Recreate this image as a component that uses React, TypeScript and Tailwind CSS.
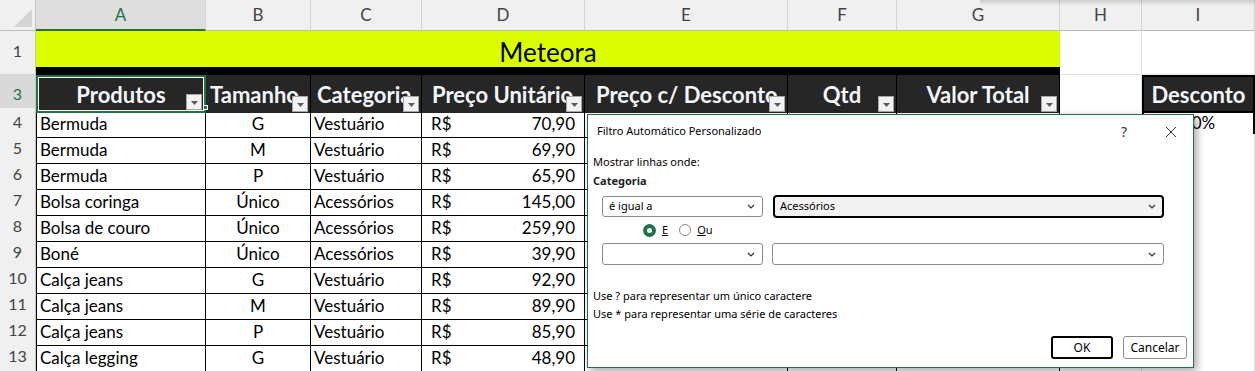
import React from "react";

const COLS =
  "grid grid-cols-[36px_170px_105px_111px_163px_203px_109px_163px_82px_113px]";

const rows = [
  ["Bermuda", "G", "Vestuário", "70,90"],
  ["Bermuda", "M", "Vestuário", "69,90"],
  ["Bermuda", "P", "Vestuário", "65,90"],
  ["Bolsa coringa", "Único", "Acessórios", "145,00"],
  ["Bolsa de couro", "Único", "Acessórios", "259,90"],
  ["Boné", "Único", "Acessórios", "39,90"],
  ["Calça jeans", "G", "Vestuário", "92,90"],
  ["Calça jeans", "M", "Vestuário", "89,90"],
  ["Calça jeans", "P", "Vestuário", "85,90"],
  ["Calça legging", "G", "Vestuário", "48,90"],
];

function RowHead({ n, active }: { n?: number; active?: boolean }) {
  return (
    <div
      className={`flex items-center justify-center border-r border-b border-r-[#c4c4c4] border-b-[#d6d6d6] text-[16px] ${
        active ? "bg-[#d9d9d9] text-[#217346]" : "bg-[#f0f0f0] text-[#444]"
      }`}
    >
      {n}
    </div>
  );
}

function Grid() {
  return <div className="border-r border-b border-[#e1e1e1] bg-white" />;
}

function FilterBtn() {
  return (
    <div className="absolute right-[2px] bottom-[1px] flex h-4 w-4 items-end justify-center border border-[#a6a6a6] bg-[#f2f2f2] pb-[4px]">
      <svg width="7" height="4" viewBox="0 0 7 4">
        <path d="M0 0h7L3.5 4z" fill="#5a5a5a" />
      </svg>
    </div>
  );
}

function HeadCell({ label, align, selected }: { label: string; align: string; selected?: boolean }) {
  return (
    <div
      className={`relative flex items-center overflow-hidden whitespace-nowrap bg-[#262626] pt-[1px] text-[22px] font-bold text-[#f2f6fb] ${align} ${
        selected
          ? "border-2 border-[#217346] shadow-[inset_0_0_0_1px_#ffffff]"
          : "border-r border-r-black"
      }`}
    >
      {label}
      <FilterBtn />
    </div>
  );
}

function Chevron() {
  return (
    <svg width="8" height="5" viewBox="0 0 8 5" className="shrink-0">
      <path d="M1 1l3 3 3-3" fill="none" stroke="#333" strokeWidth="1.2" />
    </svg>
  );
}

function Dialog() {
  return (
    <div className="absolute left-[587px] top-[114px] flex h-[254px] w-[607px] flex-col border border-[#217346] bg-white font-['Noto_Sans',sans-serif] text-[11px] text-black shadow-[3px_3px_8px_rgba(0,0,0,0.35)]">
      <div className="flex h-[33px] items-center pl-[9px] pr-[16px]">
        <span className="flex-1">Filtro Automático Personalizado</span>
        <span className="mr-[38px] text-[14px] text-[#333]">?</span>
        <svg width="12" height="12" viewBox="0 0 12 12">
          <path d="M1 1l10 10M11 1L1 11" stroke="#333" strokeWidth="1" />
        </svg>
      </div>
      <div className="mt-[6px] pl-[5px] leading-4">Mostrar linhas onde:</div>
      <div className="mt-[3px] pl-[5px] font-bold leading-4 text-[#222]">Categoria</div>

      <div className="mt-[6px] flex items-center gap-[10px] pl-[14px]">
        <div className="flex h-[21px] w-[161px] items-center justify-between rounded-[3px] border border-[#8c8c8c] pl-[6px] pr-[7px]">
          <span>é igual a</span>
          <Chevron />
        </div>
        <div className="flex h-[23px] w-[391px] items-center justify-between rounded-[4px] border-2 border-black bg-[#f3f3f3] pl-[5px] pr-[6px]">
          <span>Acessórios</span>
          <Chevron />
        </div>
      </div>

      <div className="mt-[4px] flex h-4 items-center pl-[55px]">
        <span className="flex h-[13px] w-[13px] items-center justify-center rounded-full bg-[#217346]">
          <span className="h-[5px] w-[5px] rounded-full bg-white" />
        </span>
        <span className="ml-[6px] underline">E</span>
        <span className="ml-[11px] h-[12px] w-[12px] rounded-full border border-[#8a8a8a]" />
        <span className="ml-[6px]">
          <span className="underline">O</span>u
        </span>
      </div>

      <div className="mt-[5px] flex items-center gap-[9px] pl-[14px]">
        <div className="flex h-[22px] w-[161px] items-center justify-end rounded-[3px] border border-[#8c8c8c] pr-[7px]">
          <Chevron />
        </div>
        <div className="flex h-[22px] w-[392px] items-center justify-end rounded-[3px] border border-[#8c8c8c] pr-[7px]">
          <Chevron />
        </div>
      </div>

      <div className="mt-[22px] pl-[5px] leading-[18px]">Use ? para representar um único caractere</div>
      <div className="pl-[5px] leading-[18px]">Use * para representar uma série de caracteres</div>

      <div className="mt-[13px] flex justify-end gap-[10px] pr-[6px]">
        <div className="flex h-[23px] w-[62px] items-center justify-center rounded-[3px] border-2 border-black text-[12px]">
          OK
        </div>
        <div className="flex h-[23px] w-[64px] items-center justify-center rounded-[3px] border border-[#8c8c8c] text-[12px]">
          Cancelar
        </div>
      </div>
    </div>
  );
}

export default function App() {
  const letters = ["A", "B", "C", "D", "E", "F", "G", "H", "I"];
  return (
    <div className="relative h-[371px] w-[1255px] overflow-hidden bg-white font-[Lato,sans-serif] text-black">
      {/* column letters */}
      <div className={`${COLS} h-[31px]`}>
        <div className="relative border-r border-b border-r-[#c4c4c4] border-b-[#bdbdbd] bg-[#f0f0f0]">
          <svg width="20" height="20" viewBox="0 0 20 20" className="absolute right-[2px] bottom-[2px]">
            <path d="M19 1v18H1z" fill="#d4d4d4" />
          </svg>
        </div>
        {letters.map((l, i) => (
          <div
            key={l}
            className={`flex items-center justify-center border-r border-r-[#d4d4d4] text-[17px] ${
              i === 0
                ? "border-b-2 border-b-[#217346] bg-[#dedede] text-[#217346]"
                : "border-b border-b-[#bdbdbd] bg-[#f0f0f0] text-[#444]"
            }`}
          >
            {l}
          </div>
        ))}
      </div>

      {/* row 1 */}
      <div className={`${COLS} h-[36px]`}>
        <RowHead n={1} />
        <div className="col-span-7 flex items-center justify-center bg-[#dcff00] pt-[2px] text-[26px]">
          Meteora
        </div>
        <Grid />
        <Grid />
      </div>

      {/* row 2 */}
      <div className={`${COLS} h-[8px]`}>
        <RowHead />
        <div className="col-span-7 bg-black" />
        <Grid />
        <Grid />
      </div>

      {/* row 3 */}
      <div className={`${COLS} h-[33px]`}>
        <RowHead n={3} active />
        <HeadCell label="Produtos" align="justify-center" selected />
        <HeadCell label="Tamanho" align="pl-[4px]" />
        <HeadCell label="Categoria" align="pl-[6px]" />
        <HeadCell label="Preço Unitário" align="pl-[10px]" />
        <HeadCell label="Preço c/ Desconto" align="pl-[11px]" />
        <HeadCell label="Qtd" align="justify-center" />
        <HeadCell label="Valor Total" align="justify-center" />
        <div className="border-r border-b border-[#e1e1e1] bg-white" />
        <div className="flex items-center justify-center border-2 border-black bg-[#262626] pt-[1px] text-[22px] font-bold text-[#f2f6fb]">
          Desconto
        </div>
      </div>

      {rows.map((r, i) => (
        <div key={i} className={`${COLS} h-[26px] text-[17px]`}>
          <RowHead n={i + 4} />
          <div className="flex items-center overflow-hidden whitespace-nowrap border-x border-b border-black pl-[3px] pt-[3px]">
            {r[0]}
          </div>
          <div className="flex items-center justify-center border-r border-b border-black pt-[3px]">{r[1]}</div>
          <div className="flex items-center border-r border-b border-black pl-[3px] pt-[3px]">{r[2]}</div>
          <div className="flex items-center justify-between border-r border-b border-black pl-[9px] pr-[9px] pt-[3px]">
            <span>R$</span>
            <span>{r[3]}</span>
          </div>
          <div className="border-r border-b border-black" />
          <div className="border-r border-b border-black" />
          <div className="border-r border-b border-black" />
          <Grid />
          {i === 0 ? (
            <div className="flex items-center justify-center border-x-2 border-b-2 border-black pt-[2px]">10%</div>
          ) : (
            <Grid />
          )}
        </div>
      ))}

      {/* top of row 14 */}
      <div className={`${COLS} h-[26px]`}>
        <RowHead />
        <div className="border-x border-black" />
        <div className="border-r border-black" />
        <div className="border-r border-black" />
        <div className="border-r border-black" />
        <div className="border-r border-black" />
        <div className="border-r border-black" />
        <div className="border-r border-black" />
        <Grid />
        <Grid />
      </div>

      {/* selection handle */}
      <div className="absolute left-[203px] top-[105px] h-[5px] w-[5px] border border-white bg-[#217346]" />

      {/* shadow of a window above */}
      <div className="absolute left-[980px] top-0 h-[6px] w-[275px] bg-gradient-to-b from-black/15 to-transparent" />

      <Dialog />
    </div>
  );
}
